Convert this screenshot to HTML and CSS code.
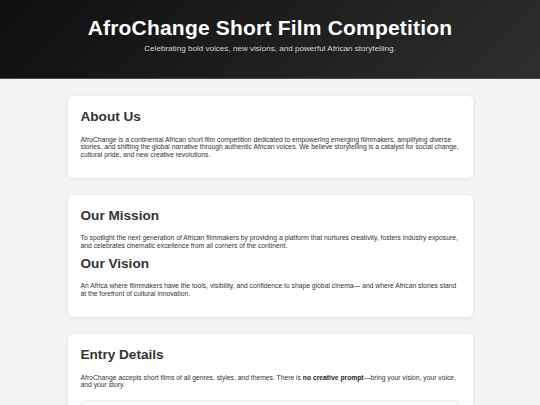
FILE: index.html
```html
<!DOCTYPE html>
<html lang="en">
<head>
<meta charset="utf-8">
<title>AfroChange Short Film Competition</title>
<link rel="stylesheet" href="styles.css">
</head>
<body>
<header class="hero">
  <h1 class="hero-title">AfroChange Short Film Competition</h1>
  <p class="hero-sub">Celebrating bold voices, new visions, and powerful African storytelling.</p>
</header>
<main class="content">
  <section class="card">
    <h2 class="card-title">About Us</h2>
    <p class="card-text">AfroChange is a continental African short film competition dedicated to empowering emerging filmmakers, amplifying diverse stories, and shifting the global narrative through authentic African voices. We believe storytelling is a catalyst for social change, cultural pride, and new creative revolutions.</p>
  </section>
  <section class="card">
    <h2 class="card-title">Our Mission</h2>
    <p class="card-text">To spotlight the next generation of African filmmakers by providing a platform that nurtures creativity, fosters industry exposure, and celebrates cinematic excellence from all corners of the continent.</p>
    <h2 class="card-title">Our Vision</h2>
    <p class="card-text">An Africa where filmmakers have the tools, visibility, and confidence to shape global cinema— and where African stories stand at the forefront of cultural innovation.</p>
  </section>
  <section class="card">
    <h2 class="card-title">Entry Details</h2>
    <p class="card-text">AfroChange accepts short films of all genres, styles, and themes. There is <strong class="em">no creative prompt</strong>—bring your vision, your voice, and your story.</p>
    <div class="inner-box"></div>
  </section>
</main>
</body>
</html>
```
FILE: styles.css
```css
html, body {
  margin: 0;
  padding: 0;
}
body {
  background: #f4f4f4;
  font-family: "Liberation Sans", Arial, sans-serif;
  color: #333;
}
.hero {
  background: linear-gradient(135deg, #0f0f0f 0%, #1e1e1e 50%, #2e2e2e 100%);
  color: #fff;
  text-align: center;
  padding: 16px 20px 17px;
  border-bottom: 1px solid #4a4a4a;
  box-sizing: border-box;
  height: 79px;
}
.hero-title {
  margin: 0;
  font-size: 21px;
  line-height: 24px;
  letter-spacing: 0.2px;
  font-weight: bold;
  color: #fff;
}
.hero-sub {
  margin: 4px 0 8px;
  font-size: 8.1px;
  color: #d6d6d6;
}
.content {
  width: 405px;
  margin: 0 auto;
  padding: 17px 0 20px;
  display: flex;
  flex-direction: column;
  gap: 17px;
}
.card {
  background: #fff;
  border-radius: 5px;
  padding: 13px 13px 13px;
  box-shadow: 0 1px 5px rgba(0, 0, 0, 0.08);
}
.card-title {
  margin: 0 0 10.5px;
  font-size: 13.6px;
  line-height: 16px;
  font-weight: bold;
  color: #333;
}
.card-text {
  margin: 0 0 6.5px;
  font-size: 6.75px;
  line-height: 7.6px;
  color: #333;
}
.em {
  font-weight: bold;
  color: #222;
}
.inner-box {
  margin-top: 11px;
  background: #fafafa;
  border: 1px solid #f0f0f0;
  border-radius: 4px;
  height: 60px;
}
```
